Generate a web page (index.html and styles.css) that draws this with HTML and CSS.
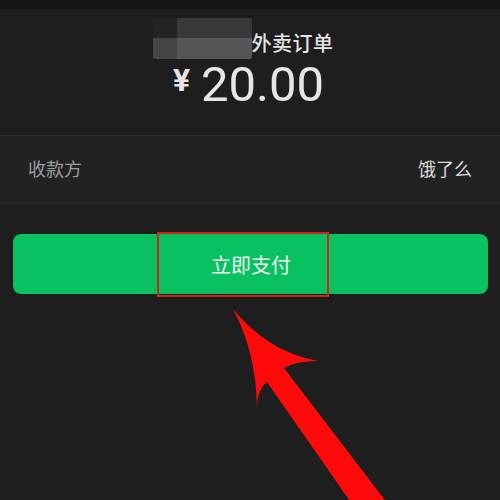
FILE: index.html
```html
<!DOCTYPE html>
<html lang="zh-CN">
<head>
<meta charset="utf-8">
<title>外卖订单</title>
<link rel="stylesheet" href="styles.css">
</head>
<body>
<div class="statusbar"></div>
<header class="header">
  <div class="title-row">
    <div class="mosaic">
      <span class="m m1"></span><span class="m m2"></span>
      <span class="m m3"></span><span class="m m4"></span>
    </div>
    <span class="title">外卖订单</span>
  </div>
  <div class="amount-row">
    <span class="yen">¥</span>
    <span class="amount">20.00</span>
  </div>
</header>
<div class="info-row">
  <span class="label">收款方</span>
  <span class="value">饿了么</span>
</div>
<div class="btn-wrap">
  <div class="pay-btn">立即支付</div>
  <div class="highlight"></div>
</div>
<svg class="arrow" width="500" height="500" viewBox="0 0 500 500">
  <path fill="#ff0a0a" d="M233,309 Q268,352 318,361 Q296,361 284,368 L394,512 L370,530 L267,382 Q258,388 257,407 Q256,352 233,309 Z"/>
</svg>
</body>
</html>
```
FILE: styles.css
```css
html, body {
  margin: 0;
  padding: 0;
}
body {
  width: 500px;
  height: 500px;
  overflow: hidden;
  position: relative;
  background: #1e1e1e;
  font-family: "Noto Sans CJK SC", Roboto, "Noto Sans", sans-serif;
}
.statusbar {
  height: 9px;
  background: #151515;
}
.header {
  padding-top: 9px;
  padding-bottom: 26px;
  display: flex;
  flex-direction: column;
  align-items: center;
}
.title-row {
  display: flex;
  align-items: flex-end;
  padding-right: 14px;
}
.mosaic {
  display: grid;
  grid-template-columns: 24px 75px;
  grid-template-rows: 20px 21px;
  border-radius: 2px;
  overflow: hidden;
}
.m1 { background: #232323; }
.m2 { background: #393939; }
.m3 { background: #454545; }
.m4 { background: #565656; }
.title {
  font-size: 20px;
  line-height: 24px;
  font-weight: 500;
  color: #e4e4e4;
  padding-bottom: 4px;
  letter-spacing: 0.5px;
}
.amount-row {
  display: flex;
  align-items: flex-start;
  margin-top: 2px;
  padding-right: 3px;
  color: #e6e6e6;
  font-family: Roboto, "Liberation Sans", sans-serif;
}
.yen {
  font-size: 32px;
  line-height: 32px;
  font-weight: 700;
  margin-top: 3px;
  margin-right: 11px;
}
.amount {
  font-size: 49px;
  line-height: 48px;
  font-weight: 400;
}
.info-row {
  height: 63px;
  padding: 0 28px 4px;
  border-top: 1px solid #2c2c2c;
  border-bottom: 1px solid #2c2c2c;
  background: #222222;
  display: flex;
  align-items: center;
  justify-content: space-between;
  font-size: 18px;
}
.label {
  color: #9c9c9c;
}
.value {
  color: #dadada;
}
.btn-wrap {
  position: relative;
  margin: 30px 12px 0 13px;
}
.pay-btn {
  height: 60px;
  border-radius: 8px;
  background: #09c160;
  color: #eef8f1;
  font-size: 20px;
  display: flex;
  align-items: center;
  justify-content: center;
  padding-left: 1px;
}
.highlight {
  position: absolute;
  left: 144px;
  top: -2px;
  width: 168px;
  height: 61px;
  border: 2px solid #d3231f;
}
.arrow {
  position: absolute;
  left: 0;
  top: 0;
}
```
